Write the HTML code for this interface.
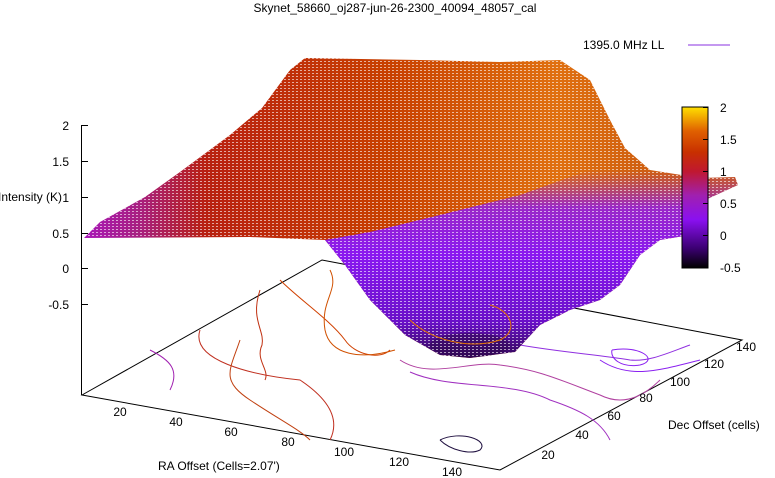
<!DOCTYPE html>
<html><head><meta charset="utf-8"><style>
html,body{margin:0;padding:0;background:#fff;}
svg{display:block;font-family:"Liberation Sans",sans-serif;font-size:12px;}
</style></head><body>
<svg width="775" height="478" viewBox="0 0 775 478" xmlns="http://www.w3.org/2000/svg">
<defs>
<linearGradient id="cb" x1="0" y1="1" x2="0" y2="0">
<stop offset="0" stop-color="#000000"/><stop offset="0.12" stop-color="#3a0070"/>
<stop offset="0.3" stop-color="#8a10f0"/><stop offset="0.45" stop-color="#a020b0"/>
<stop offset="0.6" stop-color="#c01830"/><stop offset="0.72" stop-color="#c83000"/>
<stop offset="0.85" stop-color="#e06000"/><stop offset="1" stop-color="#ffe000"/>
</linearGradient>
<linearGradient id="sL" gradientUnits="userSpaceOnUse" x1="84" y1="0" x2="640" y2="0">
<stop offset="0" stop-color="#a818b8"/><stop offset="0.1" stop-color="#a82080"/>
<stop offset="0.22" stop-color="#b82010"/><stop offset="0.55" stop-color="#c84000"/>
<stop offset="0.85" stop-color="#e07010"/><stop offset="1" stop-color="#d06010"/>
</linearGradient>
<linearGradient id="sR" gradientUnits="userSpaceOnUse" x1="0" y1="170" x2="0" y2="360">
<stop offset="0" stop-color="#9a30b0" stop-opacity="0"/><stop offset="0.2" stop-color="#9a28c8"/>
<stop offset="0.45" stop-color="#8a18f0"/><stop offset="0.8" stop-color="#6a10c8"/>
<stop offset="1" stop-color="#300850"/>
</linearGradient>
<pattern id="mesh" width="4" height="3" patternUnits="userSpaceOnUse">
<rect x="0" y="1" width="2" height="1" fill="#fff" opacity="0.6"/>
</pattern>
</defs>
<text x="395" y="12" text-anchor="middle" font-size="12">Skynet_58660_oj287-jun-26-2300_40094_48057_cal</text>
<text x="583" y="49" font-size="12">1395.0 MHz LL</text>
<line x1="688" y1="45" x2="730" y2="45" stroke="#8a30e0" stroke-width="1"/>

<path d="M82 395 L322 260 L742 340 L500 470 Z" fill="none" stroke="#000" stroke-width="1"/>
<g fill="none" stroke-width="1">
<path d="M280 280 C300 300 330 320 345 340 C355 355 380 360 390 350" stroke="#d04000"/>
<path d="M260 290 C250 320 265 330 262 345 C255 360 270 370 265 380" stroke="#c03010"/>
<path d="M330 270 C340 290 320 300 325 330 C330 355 360 360 395 350" stroke="#d05000"/>
<path d="M200 330 C190 360 250 375 300 380 C330 400 340 420 330 440" stroke="#c03020"/>
<path d="M240 340 C230 370 220 380 250 400 C280 420 300 430 310 440" stroke="#c04010"/>
<path d="M400 360 C430 380 470 360 500 365 C540 370 560 380 600 395 C620 405 640 400 660 380" stroke="#b040a0"/>
<path d="M410 372 C450 390 510 380 550 400 C580 410 600 420 610 440" stroke="#a030c0"/>
<path d="M520 345 C560 352 600 355 630 360 C650 362 670 352 690 345" stroke="#9030e0"/>
<path d="M600 360 C630 380 660 370 700 360" stroke="#8a20f0"/>
<path d="M612 350 C640 345 660 360 640 365 C620 368 610 358 612 350" stroke="#8a20f0"/>
<path d="M440 440 C460 430 490 440 480 450 C470 455 450 450 440 440" stroke="#201040"/>
<path d="M150 350 C170 360 180 370 170 390" stroke="#a020b0"/>
<path d="M500 330 C530 330 540 320 560 315" stroke="#d06000"/>
</g>
<!-- surface -->
<path id="surf" d="M84 238 L100 222 L145 197 L180 172 L230 135 L262 108 L290 70 L305 58 L420 60 L500 62 L560 60 L590 80 L610 120 L625 148 L650 170 L700 178 L735 177 L738 185 L705 200 L690 235 L660 240 L640 255 L620 285 L600 300 L570 310 L540 325 L515 352 L470 358 L440 355 L405 335 L370 300 L345 265 L325 240 L250 237 Z" fill="url(#sL)"/>
<path d="M325 240 L370 232 L440 215 L520 195 L590 170 L625 148 L650 170 L700 178 L735 177 L738 185 L705 200 L690 235 L660 240 L640 255 L620 285 L600 300 L570 310 L540 325 L515 352 L470 358 L440 355 L405 335 L370 300 L345 265 Z" fill="url(#sR)"/>
<ellipse cx="470" cy="345" rx="40" ry="12" fill="#300850" opacity="0.5"/>
<path d="M84 238 L100 222 L145 197 L180 172 L230 135 L262 108 L290 70 L305 58 L420 60 L500 62 L560 60 L590 80 L610 120 L625 148 L650 170 L700 178 L735 177 L738 185 L705 200 L690 235 L660 240 L640 255 L620 285 L600 300 L570 310 L540 325 L515 352 L470 358 L440 355 L405 335 L370 300 L345 265 L325 240 L250 237 Z" fill="url(#mesh)"/>
<path d="M410 320 C430 340 470 350 500 340 C520 330 510 310 490 305" fill="none" stroke="#e07000"/>

<g stroke="#000" stroke-width="1">
<line x1="81.5" y1="125" x2="81.5" y2="395"/>
<line x1="81" y1="125.5" x2="88" y2="125.5"/><line x1="81" y1="161.5" x2="88" y2="161.5"/>
<line x1="81" y1="197.5" x2="88" y2="197.5"/><line x1="81" y1="233.5" x2="88" y2="233.5"/>
<line x1="81" y1="268.5" x2="88" y2="268.5"/><line x1="81" y1="304.5" x2="88" y2="304.5"/>
</g>
<g text-anchor="end" font-size="12">
<text x="69" y="130">2</text><text x="69" y="166">1.5</text><text x="69" y="202">1</text>
<text x="69" y="238">0.5</text><text x="69" y="273">0</text><text x="69" y="309">-0.5</text>
</g>
<text x="-2" y="201" font-size="12">Intensity (K)</text>

<g text-anchor="middle" font-size="12">
<text x="120" y="416">20</text><text x="176" y="426">40</text><text x="231" y="436">60</text>
<text x="288" y="446">80</text><text x="344" y="456">100</text><text x="399" y="466">120</text><text x="452" y="476">140</text>
<text x="548" y="459">20</text><text x="582" y="439">40</text><text x="614" y="420">60</text>
<text x="646" y="402">80</text><text x="680" y="386">100</text><text x="714" y="368">120</text><text x="746" y="351">140</text>
</g>
<text x="158" y="470" font-size="12">RA Offset (Cells=2.07')</text>
<text x="668" y="429" font-size="12">Dec Offset (cells)</text>

<rect x="682" y="107" width="26" height="161" fill="url(#cb)" stroke="#000"/>
<g stroke="#000"><line x1="708" y1="107.5" x2="703" y2="107.5"/><line x1="708" y1="139.5" x2="703" y2="139.5"/><line x1="708" y1="171.5" x2="703" y2="171.5"/><line x1="708" y1="203.5" x2="703" y2="203.5"/><line x1="708" y1="235.5" x2="703" y2="235.5"/></g>
<g font-size="12">
<text x="720" y="112">2</text><text x="720" y="144">1.5</text><text x="720" y="176">1</text>
<text x="720" y="208">0.5</text><text x="720" y="240">0</text><text x="720" y="272">-0.5</text>
</g>
</svg>
</body></html>
